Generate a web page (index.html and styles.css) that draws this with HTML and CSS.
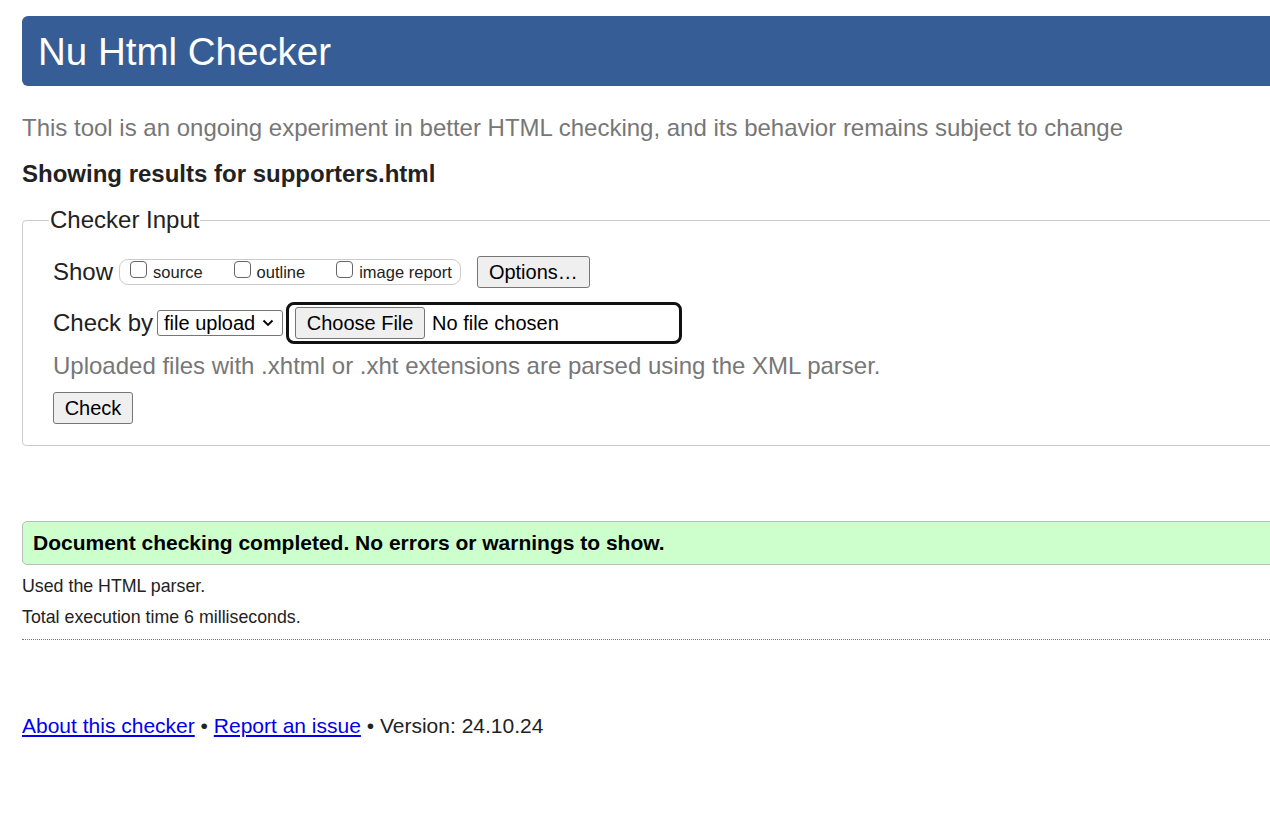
FILE: index.html
```html
<!DOCTYPE html>
<html lang="en">
<head>
<meta charset="utf-8">
<title>Nu Html Checker</title>
<link rel="stylesheet" href="styles.css">
</head>
<body>
<div class="page">
  <h1 class="banner">Nu Html Checker</h1>
  <p class="intro">This tool is an ongoing experiment in better HTML checking, and its behavior remains subject to change</p>
  <p class="showing">Showing results for supporters.html</p>
  <fieldset class="input-box">
    <legend>Checker Input</legend>
    <div class="row show-row">
      <span class="label">Show</span>
      <span class="pill">
        <label class="opt"><span class="cb"></span>source</label>
        <label class="opt"><span class="cb"></span>outline</label>
        <label class="opt"><span class="cb"></span>image report</label>
      </span>
      <span class="btn options">Options…</span>
    </div>
    <div class="row check-row">
      <span class="label">Check by</span>
      <span class="select">file upload
        <svg class="chev" width="12" height="8" viewBox="0 0 12 8"><path d="M1.5 1.5 L6 6 L10.5 1.5" fill="none" stroke="#000" stroke-width="1.8"/></svg>
      </span>
      <span class="file">
        <span class="btn choose">Choose File</span>
        <span class="nofile">No file chosen</span>
      </span>
    </div>
    <p class="note">Uploaded files with .xhtml or .xht extensions are parsed using the XML parser.</p>
    <span class="btn check">Check</span>
  </fieldset>
  <div class="success">Document checking completed. No errors or warnings to show.</div>
  <p class="small first">Used the HTML parser.</p>
  <p class="small">Total execution time 6 milliseconds.</p>
  <hr class="dots">
  <p class="footer"><a href="#">About this checker</a> • <a href="#">Report an issue</a> • Version: 24.10.24</p>
</div>
</body>
</html>
```
FILE: styles.css
```css
html { overflow: hidden; }
body {
  margin: 0;
  font-family: "Liberation Sans", Arial, sans-serif;
  color: #222;
  background: #fff;
}
.page {
  padding: 16px 0 0 22px;
  width: 1300px;
}
.banner {
  margin: 0;
  height: 70px;
  box-sizing: border-box;
  background: #365d95;
  color: #fff;
  font-weight: normal;
  font-size: 38.5px;
  line-height: 72px;
  padding-left: 16px;
  border-radius: 6px 0 0 6px;
}
.intro {
  margin: 28px 0 0;
  font-size: 24px;
  line-height: 28px;
  color: #777;
}
.showing {
  margin: 18px 0 0;
  font-size: 24px;
  line-height: 28px;
  font-weight: bold;
}
.input-box {
  margin: 18px 0 0;
  padding: 22px 0 21px 30px;
  border: 1px solid #ccc;
  border-radius: 4px;
  min-inline-size: 0;
}
.input-box legend {
  font-size: 24px;
  line-height: 28px;
  padding: 0 1px;
  margin-left: -4px;
  color: #222;
}
.row {
  display: flex;
  align-items: center;
}
.label {
  font-size: 24px;
  color: #222;
}
.show-row { height: 32px; }
.pill {
  display: flex;
  align-items: center;
  margin-left: 6px;
  height: 26px;
  box-sizing: border-box;
  border: 1px solid #ccc;
  border-radius: 9px;
  padding: 0 8px 0 10px;
  gap: 31px;
  font-size: 16.5px;
}
.opt {
  display: flex;
  align-items: center;
  color: #222;
}
.cb {
  flex: none;
  width: 17px;
  height: 17px;
  border: 1px solid #666;
  border-radius: 4px;
  margin-right: 6px;
  box-sizing: border-box;
  position: relative;
  top: -3px;
}
.btn {
  display: inline-flex;
  align-items: center;
  justify-content: center;
  box-sizing: border-box;
  background: #efefef;
  border: 1px solid #767676;
  border-radius: 3px;
  color: #000;
  font-size: 20px;
}
.options {
  margin-left: 16px;
  width: 113px;
  height: 32px;
}
.check-row { margin-top: 14px; height: 42px; }
.select {
  display: inline-flex;
  align-items: center;
  box-sizing: border-box;
  margin-left: 4px;
  width: 126px;
  height: 26px;
  border: 1px solid #767676;
  border-radius: 3px;
  font-size: 20px;
  color: #000;
  padding-left: 6px;
  gap: 6px;
}
.chev { margin-left: 1px; }
.file {
  display: flex;
  align-items: center;
  box-sizing: border-box;
  margin-left: 3px;
  width: 396px;
  height: 42px;
  border: 3px solid #111;
  border-radius: 8px;
  padding-left: 6px;
}
.choose {
  width: 130px;
  height: 32px;
}
.nofile {
  margin-left: 7px;
  font-size: 20px;
  color: #000;
}
.note {
  margin: 8px 0 0;
  font-size: 24px;
  line-height: 28px;
  color: #777;
}
.check {
  margin-top: 12px;
  width: 80px;
  height: 32px;
}
.success {
  margin-top: 75px;
  height: 44px;
  box-sizing: border-box;
  background: #ccffcc;
  border: 1px solid #bbb;
  border-radius: 5px 0 0 5px;
  font-size: 21px;
  font-weight: bold;
  color: #000;
  line-height: 42px;
  padding-left: 10px;
}
.small {
  margin: 9px 0 0;
  font-size: 17.8px;
  line-height: 22px;
  color: #222;
}
.small.first { margin-top: 10px; }
.dots {
  margin: 11px 0 0;
  border: 0;
  border-top: 1px dotted #777;
  height: 0;
}
.footer {
  margin: 73px 0 0;
  font-size: 21px;
  line-height: 26px;
  color: #222;
}
.footer a { color: #0000ee; }
```
